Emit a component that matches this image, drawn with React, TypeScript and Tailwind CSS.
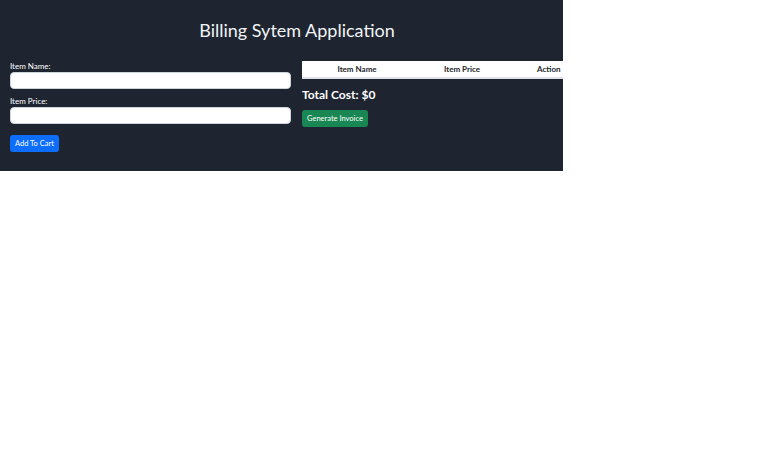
export default function App() {
  return (
    <div className="w-[780px] h-[470px] bg-white font-['Lato',sans-serif]">
      <div className="w-[563px] h-[171px] bg-[#1e2430] overflow-hidden text-white">
        <h1 className="pt-[18px] pl-[31px] text-center text-[18px] leading-[24px] text-[#f1f3f5] font-normal">
          Billing Sytem Application
        </h1>
        <div className="mt-[19px] flex gap-[11px] pl-[10px]">
          <div className="w-[281px] shrink-0 flex flex-col">
            <label className="text-[8px] leading-[10px] mb-[1px]">Item Name:</label>
            <input className="h-[17px] rounded-[4px] bg-white border border-[#ced4da] outline-none" />
            <label className="mt-[7px] text-[8px] leading-[10px] mb-[1px]">Item Price:</label>
            <input className="h-[17px] rounded-[4px] bg-white border border-[#ced4da] outline-none" />
            <div className="mt-[11px] flex">
              <button className="h-[17px] px-[5px] rounded-[3px] bg-[#0d6efd] text-[7.5px] leading-[10px] text-white">
                Add To Cart
              </button>
            </div>
          </div>
          <div className="w-[281px] shrink-0 flex flex-col">
            <table className="w-[300px] bg-white text-[#212529] border-b-2 border-[#dee2e6]">
              <thead>
                <tr className="h-[17px] text-[8px] font-bold">
                  <th className="w-[110px] text-center font-bold">Item Name</th>
                  <th className="w-[100px] text-center font-bold">Item Price</th>
                  <th className="w-[90px] text-left pl-[25px] font-bold">Action</th>
                </tr>
              </thead>
            </table>
            <div className="mt-[8px] text-[12px] leading-[16px] font-bold">Total Cost: $0</div>
            <div className="mt-[7px] flex">
              <button className="h-[17px] px-[5px] rounded-[3px] bg-[#198754] text-[7.5px] leading-[10px] text-white">
                Generate Invoice
              </button>
            </div>
          </div>
        </div>
      </div>
    </div>
  )
}
